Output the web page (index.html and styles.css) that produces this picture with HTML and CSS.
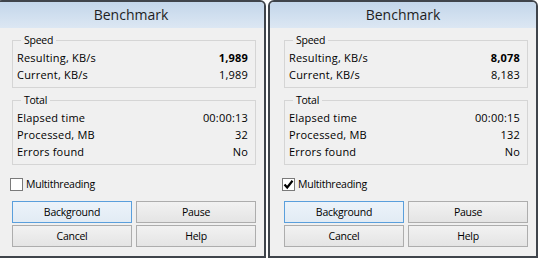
FILE: index.html
```html
<!DOCTYPE html>
<html lang="en">
<head>
  <meta charset="UTF-8" />
  <title>Benchmark</title>
  <link rel="stylesheet" href="styles.css">
</head>
<body>
  <div class="window first">
    <div class="titlebar">Benchmark</div>
    <div class="client">
      <fieldset class="group">
        <legend>Speed</legend>
        <div class="row"><span>Resulting, KB/s</span><b>1,989</b></div>
        <div class="row"><span>Current, KB/s</span><span>1,989</span></div>
      </fieldset>
      <fieldset class="group">
        <legend>Total</legend>
        <div class="row"><span>Elapsed time</span><span>00:00:13</span></div>
        <div class="row"><span>Processed, MB</span><span>32</span></div>
        <div class="row"><span>Errors found</span><span>No</span></div>
      </fieldset>
      <label class="check"><span class="box"></span>Multithreading</label>
      <div class="buttons">
        <button class="default">Background</button>
        <button>Pause</button>
        <button>Cancel</button>
        <button>Help</button>
      </div>
    </div>
  </div>

  <div class="window">
    <div class="titlebar">Benchmark</div>
    <div class="client">
      <fieldset class="group">
        <legend>Speed</legend>
        <div class="row"><span>Resulting, KB/s</span><b>8,078</b></div>
        <div class="row"><span>Current, KB/s</span><span>8,183</span></div>
      </fieldset>
      <fieldset class="group">
        <legend>Total</legend>
        <div class="row"><span>Elapsed time</span><span>00:00:15</span></div>
        <div class="row"><span>Processed, MB</span><span>132</span></div>
        <div class="row"><span>Errors found</span><span>No</span></div>
      </fieldset>
      <label class="check"><span class="box">
        <svg width="11" height="11" viewBox="0 0 11 11"><path d="M1.5 5.5 L4.2 8.5 L9.5 1.8" fill="none" stroke="#000" stroke-width="2.2"/></svg>
      </span>Multithreading</label>
      <div class="buttons">
        <button class="default">Background</button>
        <button>Pause</button>
        <button>Cancel</button>
        <button>Help</button>
      </div>
    </div>
  </div>
</body>
</html>
```

FILE: styles.css
```css
body {
  margin: 0;
  width: 540px;
  height: 260px;
  overflow: hidden;
  background: #fff;
  display: flex;
  gap: 2px;
  font-family: "Open Sans", "Noto Sans", sans-serif;
  font-size: 10.5px;
  letter-spacing: -0.25px;
  color: #000;
}
.window {
  width: 270px;
  height: 258px;
  box-sizing: border-box;
  border: 2px solid #3f444b;
  border-radius: 6px 6px 0 0;
  background: #f0f0f0;
  display: flex;
  flex-direction: column;
  overflow: hidden;
}
.window.first {
  margin-left: -4px;
}
.titlebar {
  height: 26px;
  line-height: 26px;
  text-align: center;
  font-size: 14px;
  letter-spacing: 0;
  color: #1e1e1e;
  background: linear-gradient(#c3d6ea, #dce7f3);
}
.client {
  flex: 1;
  padding: 5px 8px 0 14px;
  display: flex;
  flex-direction: column;
}
.group {
  margin: 0 0 5px 0;
  padding: 1px 7px 4px 4px;
  border: 1px solid #d5d5d5;
  min-inline-size: 0;
}
.group legend {
  padding: 0 3px;
  margin-left: 4px;
  line-height: 15px;
}
.row {
  display: flex;
  justify-content: space-between;
  font-size: 11px;
  letter-spacing: 0.2px;
  line-height: 17px;
}
.row b {
  font-weight: 700;
}
.check {
  display: flex;
  align-items: center;
  gap: 3px;
  line-height: 17px;
  margin: 6px 0 0 -2px;
}
.box {
  width: 11px;
  height: 11px;
  border: 1px solid #7a7a7a;
  background: #fff;
  display: flex;
  align-items: center;
  justify-content: center;
}
.buttons {
  display: grid;
  grid-template-columns: 1fr 1fr;
  gap: 2px 4px;
  margin-top: 8px;
}
button {
  height: 22px;
  font-family: inherit;
  font-size: 10.5px;
  letter-spacing: -0.25px;
  color: #000;
  border: 1px solid #adadad;
  border-radius: 0;
  background: linear-gradient(#f2f2f2, #e4e4e4);
  padding: 0;
}
button.default {
  border-color: #5a9fdc;
  background: linear-gradient(#ecf3fa, #e2ebf4);
}
```
